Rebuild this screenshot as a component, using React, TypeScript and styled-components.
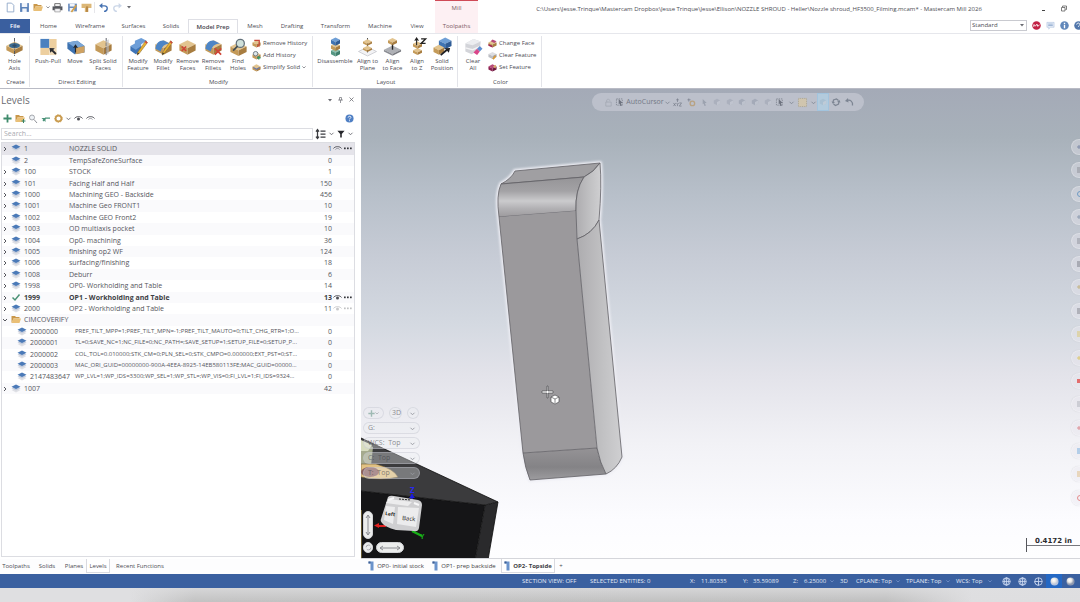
import React from "react";
import styled, { createGlobalStyle, css } from "styled-components";

const Global = createGlobalStyle`
  *, *::before, *::after { box-sizing: border-box; }
  body { margin: 0; background: #dedee0; }
  button, input, select { font: inherit; color: inherit; }
  button { border: 0; background: none; padding: 0; cursor: default; }
  svg { display: block; flex: none; overflow: visible; }
`;

const App = styled.div`
  display: flex;
  flex-direction: column;
  min-height: 100vh;
  overflow: hidden;
  background: #fff;
  color: #4b4c53;
  font-family: "Open Sans", "Liberation Sans", sans-serif;
  font-size: 6px;
  line-height: 8px;
`;

/* ---------- title bar and ribbon tabs ---------- */

const TopBar = styled.header`
  display: flex;
  height: 33px;
`;

const TopLeft = styled.div`
  width: 435px;
  display: flex;
  flex-direction: column;
  justify-content: space-between;
`;

const QuickAccess = styled.div`
  display: flex;
  align-items: center;
  height: 14px;
  padding-left: 3px;
`;

const QuickButton = styled.button<{ $w?: number }>`
  display: flex;
  justify-content: center;
  width: ${(p) => p.$w ?? 14}px;
`;

const QuickDivider = styled.span`
  width: 1px;
  height: 11px;
  margin: 0 1px;
  background: #e6e6ea;
`;

const TabRow = styled.nav`
  display: flex;
  height: 14px;
`;

const Tab = styled.button<{ $w: number; $kind?: "file" | "active" }>`
  width: ${(p) => p.$w}px;
  white-space: nowrap;
  ${(p) => p.$kind === "file" && css`background: #3a5f9f; color: #fff; font-weight: 600;`}
  ${(p) =>
    p.$kind === "active" &&
    css`
      border: 1px solid #dedfe5;
      border-bottom: 0;
      font-weight: 600;
      color: #44454c;
    `}
`;

const ContextTabs = styled.div`
  display: flex;
  flex-direction: column;
  width: 43px;
  margin-right: 49px;
  border-top: 1px solid #cf4a57;
  background: #fdf0f3;
  text-align: center;
  color: #7b5a63;
  button { height: 14px; }
`;

const ContextTitle = styled.span`
  flex: 1;
  padding-top: 3px;
`;

const TopRight = styled.div`
  flex: 1;
  display: flex;
  flex-direction: column;
  justify-content: space-between;
`;

const WindowRow = styled.div`
  display: flex;
  align-items: center;
  justify-content: space-between;
  height: 17px;
  padding-right: 13px;
  white-space: nowrap;
`;

const WindowTitle = styled.span`
  flex: 1;
  padding-right: 50px;
  text-align: center;
`;

const WindowButtons = styled.div`
  display: flex;
  gap: 15px;
`;

const HelpRow = styled.div`
  display: flex;
  align-items: center;
  justify-content: flex-end;
  gap: 5px;
  height: 16px;
  margin-right: -3px;
`;

const StyleSelect = styled.select`
  width: 57px;
  height: 11px;
  padding: 0 1px;
  border: 1px solid #c9cad0;
  border-radius: 0;
  background: #fff;
  appearance: none;
  font-size: 6px;
  line-height: 9px;
`;

const SelectWrap = styled.label`
  display: grid;
  align-items: center;
  justify-items: end;
  > * { grid-area: 1 / 1; }
  > svg { margin-right: 3px; }
`;

/* ---------- ribbon ---------- */

const Ribbon = styled.section`
  display: flex;
  height: 56px;
  padding-top: 2px;
  border-top: 1px solid #e6e7ec;
  border-bottom: 1px solid #b9bbc5;
`;

const Group = styled.div<{ $w: number }>`
  display: flex;
  flex-direction: column;
  justify-content: space-between;
  width: ${(p) => p.$w}px;
  height: 51px;
  padding: 1px 0 1px 2px;
  border-right: 1px solid #e3e4e9;
`;

const GroupBody = styled.div`
  display: flex;
  align-items: flex-start;
`;

const GroupLabel = styled.span`
  text-align: center;
  line-height: 8px;
`;

const BigButton = styled.button<{ $w: number }>`
  display: flex;
  flex-direction: column;
  align-items: center;
  gap: 2px;
  width: ${(p) => p.$w}px;
  padding-top: 1px;
  flex: none;
  white-space: nowrap;
  line-height: 7px;
`;

const SmallList = styled.div`
  display: flex;
  flex-direction: column;
  padding: 0 0 0 2px;
`;

const SmallButton = styled.button`
  display: flex;
  align-items: center;
  gap: 2px;
  height: 12px;
  white-space: nowrap;
`;

/* ---------- workspace ---------- */

const Workspace = styled.main`
  flex: 1;
  display: flex;
  min-height: 0;
`;

const Panel = styled.aside`
  display: flex;
  flex-direction: column;
  flex: none;
  width: 361px;
`;

const PanelHead = styled.div`
  display: flex;
  align-items: center;
  justify-content: space-between;
  height: 21px;
  padding: 0 7px 0 1px;
`;

const PanelTitle = styled.h1`
  margin: 0;
  font-size: 10px;
  font-weight: 400;
  line-height: 14px;
  color: #6a6b72;
`;

const IconRow = styled.div<{ $gap: number }>`
  display: flex;
  align-items: center;
  gap: ${(p) => p.$gap}px;
`;

const PanelTools = styled.div`
  display: flex;
  align-items: center;
  justify-content: space-between;
  height: 17px;
  padding: 0 7px 0 3px;
`;

const SearchRow = styled.div`
  display: flex;
  align-items: center;
  gap: 3px;
  height: 13px;
  padding: 0 8px 0 1px;
`;

const Search = styled.input`
  flex: 1;
  min-width: 0;
  height: 12px;
  padding: 0 2px;
  border: 1px solid #dcdde2;
  background: #fff;
  font-size: 7px;
  outline: 0;
  &::placeholder { color: #a9aab1; opacity: 1; }
`;

const TableWrap = styled.div`
  flex: 1;
  margin: 2px 6px 2px 1px;
  border: 1px solid #dcdde2;
`;

const LevelTable = styled.table`
  width: 100%;
  table-layout: fixed;
  border-collapse: collapse;
  font-size: 7px;
  line-height: 11px;
  color: #55565c;
  td { padding: 0; white-space: nowrap; vertical-align: top; }
`;

const Row = styled.tr<{ $mode?: string }>`
  height: 11px;
  &:nth-child(5n + 1), &:nth-child(5n + 3) { height: 12px; }
  &:nth-child(even) { background: #fafafc; }
  ${(p) => p.$mode === "selected" && css`background: #e5e4ea;`}
  ${(p) => p.$mode === "current" && css`font-weight: 700; color: #3e3f45;`}
`;

const ExpandCell = styled.div`
  display: flex;
  align-items: center;
  height: 11px;
`;

const LevelId = styled.div<{ $child?: boolean }>`
  display: flex;
  align-items: center;
  gap: 3px;
  height: 11px;
  padding-left: ${(p) => (p.$child ? 6 : 0)}px;
`;

const Name = styled.div<{ $child?: boolean }>`
  height: 11px;
  ${(p) => p.$child && css`padding-left: 6px; font-size: 6px;`}
`;

const Count = styled.div`
  display: flex;
  justify-content: flex-end;
  height: 11px;
`;

const RowMarks = styled.div<{ $dim?: boolean }>`
  display: flex;
  align-items: center;
  gap: 1px;
  height: 11px;
  padding-left: 1px;
  opacity: ${(p) => (p.$dim ? 0.3 : 1)};
`;

/* ---------- graphics view ---------- */

const View = styled.section`
  position: relative;
  flex: 1;
  min-width: 0;
  overflow: hidden;
  border-bottom: 1px solid #d5d6db;
  background: linear-gradient(
    #a4aab7 0%, #a8b1ba 10%, #b8c0ca 23%, #c7ccd6 36%,
    #d4d9e1 50%, #e3e3ea 61%, #f2f2f6 76%, #fcfcff 92%, #fefeff 100%
  );
`;

const Scene = styled.svg`
  position: absolute;
  left: 0;
  top: 0;
  width: 100%;
  height: 100%;
`;

const SelectionBar = styled.div`
  position: absolute;
  left: 231px;
  top: 4px;
  display: flex;
  align-items: center;
  width: 272px;
  height: 18px;
  padding-left: 10px;
  border-radius: 9px;
  background: #bcc0cb;
  color: #747986;
  font-size: 7px;
`;

const BarButton = styled.button<{ $w?: number; $on?: boolean }>`
  display: flex;
  align-items: center;
  justify-content: center;
  gap: 1px;
  flex: none;
  width: ${(p) => p.$w ?? 13}px;
  height: 18px;
  ${(p) => p.$on && css`background: #b3cbdd; box-shadow: inset 0 0 0 1px #a2c4de;`}
`;

const PlaneBox = styled.div`
  position: absolute;
  left: 2px;
  bottom: 79px;
  display: flex;
  flex-direction: column;
  gap: 3px;
  width: 57px;
  color: rgba(60, 62, 70, 0.6);
  font-size: 7px;
`;

const Pill = styled.button<{ $w?: number; $alpha?: number }>`
  display: flex;
  align-items: center;
  justify-content: space-between;
  width: ${(p) => (p.$w ? p.$w + "px" : "100%")};
  height: 12px;
  padding: 0 ${(p) => (p.$w && p.$w < 16 ? 2 : 4)}px;
  border: 1px solid rgba(190, 192, 202, 0.4);
  border-radius: 6px;
  background: rgba(236, 237, 242, ${(p) => p.$alpha ?? 0.35});
`;

const SideTools = styled.div`
  position: absolute;
  right: -7px;
  top: 50px;
  display: flex;
  flex-direction: column;
  justify-content: space-between;
  height: 367px;
`;

const SideTool = styled.button<{ $c: string }>`
  display: flex;
  align-items: center;
  width: 16px;
  height: 16px;
  padding-left: 5px;
  border: 1px solid rgba(255, 255, 255, 0.25);
  border-radius: 8px;
  background: rgba(232, 230, 238, 0.4);
  box-shadow: 0 0 1px rgba(140, 142, 155, 0.4);
  color: ${(p) => p.$c};
`;

const RotatePad = styled.div`
  position: absolute;
  left: 2px;
  bottom: 5px;
  display: grid;
  grid-template-columns: 10px 28px;
  grid-template-rows: 28px 11px;
  gap: 3px;
`;

const PadButton = styled.button<{ $col?: number }>`
  display: flex;
  align-items: center;
  justify-content: center;
  border: 1px solid #d2d3d6;
  border-radius: 6px;
  background: #eceded;
  grid-column: ${(p) => p.$col ?? 1};
`;

const Scale = styled.div`
  position: absolute;
  right: 0;
  bottom: 6px;
  width: 54px;
  height: 14px;
  border-left: 1px solid #55565c;
  background: linear-gradient(#77787e, #77787e) 0 7px / 100% 1px no-repeat;
  color: #2a2a2e;
  font: 700 7px/7px "DejaVu Sans", sans-serif;
  text-align: center;
  white-space: nowrap;
`;

/* ---------- bottom ---------- */

const BottomTabs = styled.div`
  display: flex;
  height: 15px;
  padding-bottom: 1px;
  background: #fdfdfe;
`;

const PanelTabs = styled.nav`
  display: flex;
  width: 365px;
`;

const BottomTab = styled.button<{ $w: number; $on?: boolean }>`
  display: flex;
  align-items: center;
  justify-content: center;
  gap: 3px;
  width: ${(p) => p.$w}px;
  white-space: nowrap;
  ${(p) =>
    p.$on &&
    css`
      border: 1px solid #d9dae0;
      border-top: 0;
      background: #fff;
    `}
`;

const SheetTab = styled(BottomTab)`
  color: #3d3e44;
  font-weight: ${(p) => (p.$on ? 700 : 400)};
`;

const Status = styled.footer`
  display: flex;
  align-items: center;
  justify-content: flex-end;
  height: 14px;
  padding-right: 2px;
  background: #3a60a0;
  color: #e3eaf6;
  white-space: nowrap;
`;

const StatusItem = styled.span<{ $w: number }>`
  width: ${(p) => p.$w}px;
  flex: none;
`;

const StatusDrop = styled.button<{ $w: number }>`
  display: flex;
  align-items: center;
  justify-content: space-between;
  width: ${(p) => p.$w}px;
  padding-right: 3px;
  margin-right: 3px;
`;

const ShadeButton = styled.button<{ $on?: boolean }>`
  display: flex;
  align-items: center;
  justify-content: center;
  width: 16px;
  height: 14px;
  ${(p) => p.$on && css`background: #2468c4;`}
`;

const Desk = styled.div`
  height: 14px;
  background:
    linear-gradient(rgba(223, 223, 225, 0.7), rgba(223, 223, 225, 0)),
    linear-gradient(90deg, #dfdfe1 12%, #c2c2c2 18%, #bfbfbf 82%, #dedee0 90%);
`;

/* ---------- icons ---------- */

type Tone = [string, string, string];
const TAN: Tone = ["#e2c48f", "#c49a58", "#a87d40"];
const BLUE: Tone = ["#6f9fd6", "#3f74b4", "#2f5c96"];
const TEAL: Tone = ["#8cc0ae", "#559783", "#3f7f6c"];
const GREY: Tone = ["#dddee2", "#bcbec4", "#a2a4ab"];
const WINE: Tone = ["#b74a78", "#8c1f50", "#6d163d"];

const Iso = ({ x = 10, y = 10, w = 9, h = 6, t = TAN }: { x?: number; y?: number; w?: number; h?: number; t?: Tone }) => {
  const d = w / 2;
  return (
    <g>
      <polygon points={`${x - w},${y - h / 2} ${x},${y - h / 2 - d} ${x + w},${y - h / 2} ${x},${y - h / 2 + d}`} fill={t[0]} />
      <polygon points={`${x - w},${y - h / 2} ${x},${y - h / 2 + d} ${x},${y + h / 2 + d} ${x - w},${y + h / 2}`} fill={t[1]} />
      <polygon points={`${x + w},${y - h / 2} ${x},${y - h / 2 + d} ${x},${y + h / 2 + d} ${x + w},${y + h / 2}`} fill={t[2]} />
    </g>
  );
};

const Pencil = () => (
  <g>
    <path d="M18 3 L20 5 L11 17 L8.500 19 L9 16 Z" fill="#e8b130" stroke="#8a6a2a" strokeWidth=".6" />
    <path d="M9 16 L11 17 L8.500 19Z" fill="#333" />
    <path d="M18 3 L20 5 L19 6.500 L17 4.500Z" fill="#c44" />
  </g>
);

const Cross = ({ x, y, s }: { x: number; y: number; s: number }) => (
  <path d={`M${x - s} ${y - s} L${x + s} ${y + s} M${x + s} ${y - s} L${x - s} ${y + s}`} stroke="#cf4437" strokeWidth="1.800" fill="none" />
);

const bigArt: Record<string, React.ReactNode> = {
  hole: (
    <>
      <Iso y={11} h={5} />
      <ellipse cx="10" cy="8.500" rx="6" ry="3" fill="#3b6b91" />
      <path d="M10 0V20" stroke="#4a4f58" strokeWidth="1" strokeDasharray="4 1 1 1" />
      <ellipse cx="10" cy="8.500" rx="2.500" ry="1.200" fill="#2f4d68" />
    </>
  ),
  push: (
    <>
      <path d="M1 1H11V11H1Z" fill="#4a80bf" />
      <path d="M11 1H19V11H11ZM1 11H11V19H1Z" fill="#edcf9f" />
      <path d="M11 11H19V19H11Z" fill="#f0dcb9" />
      <path d="M11 11L17 11.500L15.200 13.200L19 17L17.500 18.500L13.600 14.700L12 16.500Z" fill="#2c2c30" />
    </>
  ),
  move: (
    <>
      <path d="M1 5L12 3L20 9V16L9 18L1 12Z" fill="#3d72b0" />
      <path d="M1 5L12 3L20 9L10 11Z" fill="#79a5d6" />
      <path d="M10 11L20 9V16L10 18Z" fill="#cfa262" />
      <path d="M10 9V16M8 11L10 8L12 11" stroke="#24272c" strokeWidth="1.300" fill="none" />
    </>
  ),
  split: (
    <>
      <Iso y={10.500} h={7} />
      <path d="M13 0V20" stroke="#51555d" strokeWidth="1" strokeDasharray="4 1" />
      <path d="M13 3L16 1.500V17L13 19Z" fill="#b9bdc4" opacity=".6" />
    </>
  ),
  modFeature: (
    <>
      <path d="M1 9L6 6V3L13 0L19 3L13 7V10L7 14Z" fill="#6d9ed8" />
      <path d="M1 9L7 13V18L1 14ZM7 13L13 9V14L7 18Z" fill="#3f74b6" />
      <Pencil />
    </>
  ),
  modFillet: (
    <>
      <Iso y={10.500} h={7} />
      <path d="M1 12C2 5 6 2 11 3L17 6C11 6 8 10 7 15Z" fill="#4d85c6" />
      <Pencil />
    </>
  ),
  remFaces: (
    <>
      <Iso y={10.500} h={7} />
      <Cross x={6} y={12} s={2.500} />
    </>
  ),
  remFillets: (
    <>
      <Iso y={10.500} h={7} />
      <path d="M1 12C2 5 6 2 11 3L17 6C11 6 8 10 7 15Z" fill="#4d85c6" />
      <Cross x={15} y={15} s={3.500} />
    </>
  ),
  find: (
    <>
      <Iso y={12.500} h={6} />
      <circle cx="12" cy="6" r="4.500" fill="#cfe0da" stroke="#63707a" strokeWidth="1.400" />
      <path d="M9 9L4 14" stroke="#3f4b52" strokeWidth="1.800" />
    </>
  ),
  disassemble: (
    <>
      <Iso y={16} w={5} h={4} t={TEAL} />
      <Iso y={10} w={5} h={4} />
      <Iso y={4} w={5} h={4} t={BLUE} />
    </>
  ),
  plane: (
    <>
      <path d="M0 15L10 10L20 15L10 20Z" fill="#f3f3f5" stroke="#b9bbc2" strokeWidth=".7" />
      <path d="M10 0V16" stroke="#3d3f45" />
      <Iso y={12} w={5} h={2} />
      <Iso y={5} w={5} h={2} />
    </>
  ),
  face: (
    <>
      <Iso y={14} w={9.500} h={2} t={["#aeb0b5", "#8a8c92", "#77797f"]} />
      <path d="M10 6V13" stroke="#222" strokeWidth="1.500" />
      <Iso y={4} w={5} h={3} />
    </>
  ),
  z: (
    <>
      <Iso y={15} w={5} h={3} />
      <Iso y={8} w={5} h={3} />
      <path d="M9 8V1M7 3L9 0L11 3" stroke="#222" strokeWidth="1.200" fill="none" />
      <path d="M14 1H19L14 6H19" stroke="#222" strokeWidth="1.500" fill="none" />
    </>
  ),
  position: (
    <>
      <Iso x={13} y={6} w={7} h={6} t={BLUE} />
      <Iso x={6} y={13} w={6} h={5} />
      <path d="M8 19L15 13" stroke="#1e1f23" strokeWidth="2" />
      <path d="M12.500 11.500L18.500 11L17 16.500Z" fill="#1e1f23" />
    </>
  ),
  clear: (
    <>
      <path d="M1 6L10 1L18 4L17 13L8 18L1 15Z" fill="#d3d4d9" />
      <path d="M1 6L10 1L18 4L9 8Z" fill="#ecedf0" />
      <path d="M1 11L9 13L18 9" stroke="#f3f3f5" strokeWidth="1.500" fill="none" />
      <path d="M10 16L14 12L17 15L14 19Z" fill="#d9468a" />
      <path d="M14 12L17 9L20 12L17 15Z" fill="#5f8fd0" />
    </>
  ),
};

const Big = ({ art }: { art: string }) => (
  <svg width="19" height="18" viewBox="0 0 20 20">{bigArt[art]}</svg>
);

const Mini = ({ kind }: { kind: string }) => (
  <svg width="9" height="9" viewBox="0 0 20 20">
    {kind === "set" ? <Iso y={11} h={7} t={WINE} /> : kind === "clearF" ? <Iso y={10} h={7} t={GREY} /> : <Iso y={11} h={7} />}
    {kind === "removeH" && <><path d="M5 3H16V13" stroke="#c94a3c" strokeWidth="3" fill="none" /><Cross x={14} y={15} s={3} /></>}
    {kind === "addH" && <><circle cx="8" cy="6" r="5" fill="#dfe6ea" stroke="#68757d" strokeWidth="2" /><path d="M15 11V19M11 15H19" stroke="#3b9468" strokeWidth="3" /></>}
    {kind === "simplify" && <path d="M3 10L10 14L17 10" stroke="#6c7aa8" strokeWidth="2.500" fill="none" />}
    {kind === "change" && <><path d="M1 11L10 15V19L1 15Z" fill="#a02558" /><path d="M10 1L19 5L14 9L6 5Z" fill="#b74a78" /></>}
    {kind === "clearF" && <path d="M11 18L17 11" stroke="#d79a3c" strokeWidth="4" />}
    {kind === "set" && <path d="M11 8L18 4L17 12Z" fill="#d9b06a" />}
  </svg>
);

const Caret = ({ c = "#6a6b72", s = 5 }: { c?: string; s?: number }) => (
  <svg width={s} height={s} viewBox="0 0 10 10"><path d="M1 3.500L5 7.500L9 3.500" fill="none" stroke={c} strokeWidth="1.800" /></svg>
);

const Triangle = ({ c = "#6a6b72" }: { c?: string }) => (
  <svg width="4" height="4" viewBox="0 0 8 8"><path d="M0 2H8L4 7Z" fill={c} /></svg>
);

const Expander = ({ open }: { open?: boolean }) => (
  <svg width="6" height="6" viewBox="0 0 12 12">
    <path d={open ? "M2 4L6 8L10 4" : "M4 2L8 6L4 10"} fill="none" stroke="#4c4d54" strokeWidth="1.900" />
  </svg>
);

const LayerIcon = () => (
  <svg width="10" height="9" viewBox="0 0 20 18">
    <path d="M1 12L10 8L19 12L10 17Z" fill="#dfe0e5" />
    <path d="M1 8.500L10 4L19 8.500L10 13Z" fill="#c3cbdb" />
    <path d="M1 5.500L10 1L19 5.500L10 10Z" fill="#4b7ab8" />
  </svg>
);

const CheckIcon = () => (
  <svg width="10" height="9" viewBox="0 0 20 18"><path d="M3 9L8 14L17 3" fill="none" stroke="#4a9275" strokeWidth="3" /></svg>
);

const FolderIcon = ({ plus }: { plus?: boolean }) => (
  <svg width="10" height="9" viewBox="0 0 20 18">
    <path d="M1 2H8L10 4H17V7H5L2 15H1Z" fill="#c9974a" />
    <path d="M5 7H20L17 16H1Z" fill="#e9bf76" />
    {plus && <path d="M17 10V18M13 14H21" stroke="#3b8467" strokeWidth="2" />}
  </svg>
);

const EyeIcon = ({ dot = true }: { dot?: boolean }) => (
  <svg width="9" height="7" viewBox="0 0 18 14">
    <path d="M1 7C4 2 14 2 17 7" fill="none" stroke="#4c4d53" strokeWidth="1.900" />
    {dot ? <circle cx="9" cy="8" r="3" fill="#4c4d53" /> : <path d="M5 9C7 6 11 6 13 9" fill="none" stroke="#777880" strokeWidth="1.500" />}
  </svg>
);

const DotsIcon = () => (
  <svg width="9" height="3" viewBox="0 0 9 3">
    {[1, 4, 7].map((x) => <rect key={x} x={x} y="0.500" width="1.700" height="1.700" fill="#333439" />)}
  </svg>
);

const GlobeIcon = ({ half }: { half?: boolean }) => (
  <svg width="9" height="9" viewBox="0 0 18 18" fill="none" stroke="#cfdcf2" strokeWidth="1.600">
    <circle cx="9" cy="9" r="7.500" />
    <path d="M1.500 9H16.500M9 1.500V16.500" />
    {half ? <path d="M9 9V16.500C4 16 2 13 1.500 9Z" fill="#3a60a0" /> : <ellipse cx="9" cy="9" rx="4" ry="7.500" />}
  </svg>
);

const BallIcon = ({ id, c }: { id: string; c: string }) => (
  <svg width="9" height="9" viewBox="0 0 18 18">
    <defs><radialGradient id={id} cx=".4" cy=".35"><stop offset="0" stopColor="#fff" /><stop offset=".5" stopColor="#eceae6" /><stop offset="1" stopColor={c} /></radialGradient></defs>
    <circle cx="9" cy="9" r="8" fill={`url(#${id})`} />
  </svg>
);

const SheetIcon = () => (
  <svg width="6" height="10" viewBox="0 0 12 20"><path d="M1 1H11V19H5V5H1Z" fill="#6b93cb" /><path d="M1 1H5V5H1Z" fill="#3f5f92" /></svg>
);

const Q = ({ children, w = 11 }: { children: React.ReactNode; w?: number }) => (
  <svg width={w} height={w} viewBox="0 0 20 20">{children}</svg>
);

const BlobIcon = ({ c = "#a5abb8" }: { c?: string }) => (
  <Q w={8}><path d="M2 6L10 2L18 6V14L10 18L2 14Z" fill={c} opacity=".75" /><path d="M10 10L18 6V14L10 18Z" fill="#ced2da" opacity=".6" /></Q>
);

const CursorIcon = ({ c = "#858b97", box }: { c?: string; box?: boolean }) => (
  <Q w={9}>
    {box && <path d="M1 2H14V16H1Z" fill="none" stroke={c} strokeWidth="1.500" strokeDasharray="3 2" />}
    <path d="M6 2L15 11H11L13 17L10 18L8 12L6 14Z" fill={c} />
  </Q>
);

const InvertIcon = () => (
  <Q w={10}>
    <path d="M4 11L5 6L11 4L15 7M16 9L15 14L9 17L5 14" fill="none" stroke="#7d8593" strokeWidth="2.500" />
    <path d="M1 9L4 14L8 10ZM12 10L19 11L17 6Z" fill="#7d8593" />
  </Q>
);

const LastIcon = () => (
  <Q w={10}>
    <path d="M17 17C18 9 13 5 6 7" fill="none" stroke="#7d8593" strokeWidth="2.500" />
    <path d="M8 2L2 8L9 11Z" fill="#7d8593" />
  </Q>
);

/* ---------- data ---------- */

const tabs: [string, number, ("file" | "active")?][] = [
  ["File", 30, "file"], ["Home", 37], ["Wireframe", 46], ["Surfaces", 41], ["Solids", 34],
  ["Model Prep", 50, "active"], ["Mesh", 34], ["Drafting", 40], ["Transform", 47], ["Machine", 42], ["View", 32],
];

type BigSpec = [string, string, string, number];
const groups: { label: string; w: number; big: BigSpec[]; small?: [string, string, boolean?][] }[] = [
  { label: "Create", w: 30, big: [["hole", "Hole", "Axis", 25]] },
  { label: "Direct Editing", w: 93, big: [["push", "Push-Pull", "", 32], ["move", "Move", "", 22], ["split", "Split Solid", "Faces", 34]] },
  {
    label: "Modify", w: 190,
    big: [["modFeature", "Modify", "Feature", 26], ["modFillet", "Modify", "Fillet", 24], ["remFaces", "Remove", "Faces", 25], ["remFillets", "Remove", "Fillets", 26], ["find", "Find", "Holes", 24]],
    small: [["removeH", "Remove History"], ["addH", "Add History"], ["simplify", "Simplify Solid", true]],
  },
  {
    label: "Layout", w: 145,
    big: [["disassemble", "Disassemble", "", 40], ["plane", "Align to", "Plane", 25], ["face", "Align", "to Face", 25], ["z", "Align", "to Z", 24], ["position", "Solid", "Position", 26]],
  },
  { label: "Color", w: 84, big: [["clear", "Clear", "All", 26]], small: [["change", "Change Face"], ["clearF", "Clear Feature"], ["set", "Set Feature"]] },
];

type Level = { id: string; name?: string; n?: string; mode?: "selected" | "current" | "dim"; kind?: "folder" | "child" | "leaf" };
const levels: Level[] = [
  { id: "1", name: "NOZZLE SOLID", n: "1", mode: "selected" },
  { id: "2", name: "TempSafeZoneSurface", n: "0", kind: "leaf" },
  { id: "100", name: "STOCK", n: "1" },
  { id: "101", name: "Facing Half and Half", n: "150" },
  { id: "1000", name: "Machining GEO - Backside", n: "456" },
  { id: "1001", name: "Machine Geo FRONT1", n: "10" },
  { id: "1002", name: "Machine GEO Front2", n: "19" },
  { id: "1003", name: "OD multiaxis pocket", n: "10" },
  { id: "1004", name: "Op0- machining", n: "36" },
  { id: "1005", name: "finishing op2 WF", n: "124" },
  { id: "1006", name: "surfacing/finishing", n: "18" },
  { id: "1008", name: "Deburr", n: "6" },
  { id: "1998", name: "OP0- Workholding and Table", n: "14" },
  { id: "1999", name: "OP1 - Workholding and Table", n: "13", mode: "current" },
  { id: "2000", name: "OP2 - Workholding and Table", n: "11", mode: "dim" },
  { id: "CIMCOVERIFY", kind: "folder" },
  { id: "2000000", name: "PREF_TILT_MPP=1;PREF_TILT_MPN=-1;PREF_TILT_MAUTO=0;TILT_CHG_RTR=1;O...", n: "0", kind: "child" },
  { id: "2000001", name: "TL=0;SAVE_NC=1;NC_FILE=0;NC_PATH=;SAVE_SETUP=1;SETUP_FILE=0;SETUP_P...", n: "0", kind: "child" },
  { id: "2000002", name: "COL_TOL=0.010000;STK_CM=0;PLN_SEL=0;STK_CMPO=0.000000;EXT_PST=0;ST...", n: "0", kind: "child" },
  { id: "2000003", name: "MAC_ORI_GUID=00000000-900A-4EEA-8925-14EB580113FE;MAC_GUID=00000...", n: "0", kind: "child" },
  { id: "2147483647", name: "WP_LVL=1;WP_IDS=3300;WP_SEL=1;WP_STL=;WP_VIS=0;FI_LVL=1;FI_IDS=9324...", n: "0", kind: "child" },
  { id: "1007", n: "42" },
];

const sideColors = ["#7f8aa8", "#8d8f97", "#6f9bc4", "#8d9bb0", "#8f929c", "#7c7e88", "#c4b384", "#85868e", "#dcc873", "#dcc873", "#e36d6d", "#b0b2bb", "#dd8f95", "#79aede", "#e0bd85", "#e58d8d"];

/* ---------- graphics scene ---------- */

const Part = () => (
  <g strokeLinejoin="round">
    <defs>
      <linearGradient id="band" x1="0" y1="0" x2="0" y2="1">
        <stop offset="0" stopColor="#959497" /><stop offset=".35" stopColor="#a3a2a5" />
        <stop offset=".6" stopColor="#cbcbcd" /><stop offset=".8" stopColor="#b0afb2" /><stop offset="1" stopColor="#9c9a9d" />
      </linearGradient>
      <linearGradient id="side" x1="0" y1="0" x2="1" y2="0">
        <stop offset="0" stopColor="#adacaf" /><stop offset=".6" stopColor="#c2c2c4" /><stop offset="1" stopColor="#cfcfd1" />
      </linearGradient>
      <linearGradient id="foot" x1="0" y1="0" x2="0" y2="1">
        <stop offset="0" stopColor="#959396" /><stop offset=".6" stopColor="#848386" /><stop offset="1" stopColor="#9d9c9f" />
      </linearGradient>
      <filter id="halo" x="-20%" y="-10%" width="140%" height="120%"><feGaussianBlur stdDeviation="1.200" /></filter>
    </defs>
    <path
      d="M515 171L600 163Q602 185 599 220L622 457Q617 469 606 474L530 480L523 453L499 217Q496 195 501 184Q511 179 515 171Z"
      fill="none" stroke="#eeeef4" strokeWidth="4" filter="url(#halo)"
    />
    <g stroke="#626166" strokeWidth=".8">
      <path d="M515 171L600 163Q594 172 584 177L501 184Q511 179 515 171Z" fill="#a09fa2" />
      <path d="M501 184L584 177Q575 190 576 211L499 217Q496 195 501 184Z" fill="url(#band)" />
      <path d="M499 217L576 211L577 239L597 448L523 453Z" fill="#9b999c" stroke="none" />
      <path d="M523 453L597 448Q600 463 606 474L530 480Q525 468 523 453Z" fill="url(#foot)" />
      <path d="M584 177Q594 172 600 163Q602 185 599 220Q592 234 577 239L576 211Q575 190 584 177Z" fill="url(#side)" />
      <path d="M577 239Q592 234 599 220L622 457Q617 469 606 474Q600 463 597 448Z" fill="url(#side)" />
      <path d="M499 217L523 453" fill="none" />
    </g>
    <g fill="#fff" stroke="#3c3c40" strokeWidth=".6">
      <path d="M547 386V391H542V393H547V398H548V393H553V391H548V386Z" />
      <path d="M551 397L555 395L559 397V402L555 404L551 402Z" />
      <path d="M551 397L555 399L559 397M555 399V403" fill="none" />
    </g>
  </g>
);

const Table3D = () => (
  <g>
    <path d="M361 438L498 502L485 505L361 491Z" fill="#3b3b3d" />
    <path d="M361 491L485 505L475 560H361Z" fill="#151517" />
    <path d="M485 505L498 502L488 560H475Z" fill="#2a2a2c" />
    <path d="M361 438L498 502L488 560M361 491L485 505L475 560M485 505L498 502" fill="none" stroke="#0c0c0d" strokeWidth=".8" />
    <path d="M361 441L373 447L371 466H361Z" fill="#a5aa8d" />
    <path d="M361 440L372 445L368 451L361 451Z" fill="#d7dcbf" />
    <path d="M361 464L376 464Q394 469 398 477Q382 481 361 477Z" fill="#e2c283" stroke="#6d5a38" strokeWidth=".6" />
    <ellipse cx="370" cy="472" rx="9" ry="5" fill="#8a5f5f" />
    <path d="M361 510V560" stroke="#b69b4e" strokeWidth="1" />
  </g>
);

const ViewCube = () => (
  <g>
    <path d="M412 501V494" stroke="#1c1ce0" strokeWidth="1.500" fill="none" />
    <path d="M409 498L412 494L415 498Z" fill="#1c1ce0" />
    <text x="410" y="493" fill="#2a2af0" fontSize="8" fontWeight="700">Z</text>
    <path d="M386 526H377" stroke="#e02020" strokeWidth="2" />
    <path d="M379 523L374 525.500L379 528Z" fill="#e02020" />
    <path d="M412 531L422 536" stroke="#18b018" strokeWidth="2.500" />
    <text x="420" y="539" fill="#18b018" fontSize="7" fontWeight="700">Y</text>
    <path d="M388 497Q390 495 394 496L418 500Q422 501 422 505L419 528Q418 532 414 531L396 530Q385 527 382 523Q380 521 381 519Z" fill="#cfcfd1" />
    <path d="M389 499L412 502L408 506L386 503ZM398 507L419 508L416 527L397 524ZM386 506L395 507L393 524L384 520Z" fill="#ececed" />
    <path d="M388 500L394 498M414 503L419 505" stroke="#f7f7f8" strokeWidth="2" />
    <text x="402" y="520" fill="#1e1e20" fontSize="6" transform="rotate(5 402 520)">Back</text>
    <text x="385" y="515" fill="#1e1e20" fontSize="5" fontWeight="700" transform="rotate(8 385 515)">Left</text>
    <path d="M399 499L411 500" stroke="#333" strokeWidth="1" strokeDasharray="2 1" />
  </g>
);

export default function MastercamWindow() {
  return (
    <App>
      <Global />
      <TopBar>
        <TopLeft>
          <QuickAccess>
            <QuickButton aria-label="New"><Q><path d="M4 2H12L16 6V18H4Z" fill="#fff" stroke="#86a0c4" strokeWidth="1.500" /></Q></QuickButton>
            <QuickButton aria-label="Save"><Q><path d="M2 2H18V18H2Z" fill="#5b82b9" /><path d="M5 2H15V9H5ZM6 12H14V18H6Z" fill="#f2f5fa" /></Q></QuickButton>
            <QuickButton aria-label="Open"><FolderIcon /></QuickButton>
            <QuickButton $w={5} aria-label="Recent files"><Caret s={4} /></QuickButton>
            <QuickButton $w={15} aria-label="Print"><Q><path d="M5 3H15V8H5Z" fill="#fff" stroke="#555" strokeWidth="1.500" /><path d="M1 8H19V15H1Z" fill="#55575e" /><path d="M5 12H15V18H5Z" fill="#f3f3f5" stroke="#777" /></Q></QuickButton>
            <QuickButton aria-label="Save as"><Q><path d="M2 3H18V17H2Z" fill="#6b8dbe" /><path d="M5 3H14V8H5ZM5 11H13V17H5Z" fill="#f2f5fa" /><path d="M17 6L8 18" stroke="#d5a045" strokeWidth="3" /></Q></QuickButton>
            <QuickButton aria-label="Zip to go"><Q><path d="M1 3H19V11H13V18H7V11H1Z" fill="#dcb777" /><path d="M9 8H13V18H9Z" fill="#b98a48" /></Q></QuickButton>
            <QuickDivider />
            <QuickButton aria-label="Undo"><Q><path d="M6 7H12C19 7 18 17 11 17" fill="none" stroke="#4672b2" strokeWidth="2.500" /><path d="M2 7L8 2V12Z" fill="#4672b2" /></Q></QuickButton>
            <QuickButton aria-label="Redo"><Q><path d="M14 7H8C1 7 2 17 9 17" fill="none" stroke="#ccd7e8" strokeWidth="2.500" /><path d="M18 7L12 2V12Z" fill="#ccd7e8" /></Q></QuickButton>
            <QuickButton $w={9} aria-label="Customize"><Triangle /></QuickButton>
          </QuickAccess>
          <TabRow>
            {tabs.map(([t, w, k]) => <Tab key={t} $w={w} $kind={k}>{t}</Tab>)}
          </TabRow>
        </TopLeft>
        <ContextTabs>
          <ContextTitle>Mill</ContextTitle>
          <Tab $w={43}>Toolpaths</Tab>
        </ContextTabs>
        <TopRight>
          <WindowRow>
            <WindowTitle>C:\Users\Jesse.Trinque\Mastercam Dropbox\Jesse Trinque\Jesse\Ellison\NOZZLE SHROUD - Heller\Nozzle shroud_HF3500_Filming.mcam* - Mastercam Mill 2026</WindowTitle>
            <WindowButtons>
              <button aria-label="Minimize"><svg width="5" height="7" viewBox="0 0 5 7"><path d="M1 5.500H4" stroke="#444" /></svg></button>
              <button aria-label="Restore"><svg width="6" height="7" viewBox="0 0 12 14"><path d="M3 4V2H11V9H9M1 5H8V12H1Z" fill="none" stroke="#555" strokeWidth="1.500" /></svg></button>
            </WindowButtons>
          </WindowRow>
          <HelpRow>
            <SelectWrap>
              <StyleSelect aria-label="Attribute style"><option>Standard</option></StyleSelect>
              <Triangle />
            </SelectWrap>
            <Q w={9}><circle cx="10" cy="10" r="9.500" fill="#c22245" /><path d="M4 13V8L8 11L11 7L13 12L17 8" stroke="#fff" strokeWidth="2" fill="none" /></Q>
            <Q w={9}><path d="M2 3H18V14H10L6 18V14H2Z" fill="#e3ebf6" stroke="#9fb6d6" /><path d="M5 7H15M5 10H15" stroke="#7f9cc6" strokeWidth="1.500" /></Q>
            <Q w={9}><circle cx="10" cy="10" r="9.500" fill="#6288ba" /><path d="M10 4V7M10 9V16" stroke="#fff" strokeWidth="3" /></Q>
            <Q w={9}><circle cx="10" cy="10" r="9.500" fill="#5277ac" /><path d="M6 8C6 3 14 4 13 8C12 10 10 10 10 13" stroke="#fff" strokeWidth="2" fill="none" /></Q>
          </HelpRow>
        </TopRight>
      </TopBar>

      <Ribbon>
        {groups.map((g) => (
          <Group key={g.label} $w={g.w}>
            <GroupBody>
              {g.big.map(([art, a, b, w]) => (
                <BigButton key={a + b} $w={w}>
                  <Big art={art} />
                  <span>{a}{b && <><br />{b}</>}</span>
                </BigButton>
              ))}
              {g.small && (
                <SmallList>
                  {g.small.map(([k, t, drop]) => (
                    <SmallButton key={t}><Mini kind={k} />{t}{drop && <Caret s={4} />}</SmallButton>
                  ))}
                </SmallList>
              )}
            </GroupBody>
            <GroupLabel>{g.label}</GroupLabel>
          </Group>
        ))}
      </Ribbon>

      <Workspace>
        <Panel>
          <PanelHead>
            <PanelTitle>Levels</PanelTitle>
            <IconRow $gap={6}>
              <Triangle />
              <svg width="5" height="6" viewBox="0 0 10 12"><path d="M3 1H7V6H9H1H3ZM5 6V12" fill="none" stroke="#77787f" strokeWidth="1.500" /></svg>
              <svg width="5" height="5" viewBox="0 0 10 10"><path d="M1 1L9 9M9 1L1 9" stroke="#66676e" strokeWidth="1.500" /></svg>
            </IconRow>
          </PanelHead>
          <PanelTools>
            <IconRow $gap={3}>
              <Q w={9}><path d="M10 1V19M1 10H19" stroke="#3f8b6c" strokeWidth="4" /></Q>
              <FolderIcon plus />
              <Q w={10}><circle cx="8" cy="7" r="5" fill="#eef2f6" stroke="#8e9097" strokeWidth="1.500" /><path d="M12 11L18 18" stroke="#8e9097" strokeWidth="2" /></Q>
              <Q w={10}><path d="M1 8H9V16Z" fill="#4b9379" /><path d="M4 14L9 8H18" stroke="#4b9379" strokeWidth="2.500" fill="none" /></Q>
              <Q w={9}><circle cx="10" cy="10" r="6.500" fill="none" stroke="#c99b4e" strokeWidth="4" /><circle cx="10" cy="10" r="8.500" fill="none" stroke="#c99b4e" strokeWidth="2" strokeDasharray="3 3" /></Q>
              <Caret />
              <EyeIcon />
              <EyeIcon dot={false} />
            </IconRow>
            <Q w={9}><circle cx="10" cy="10" r="9" fill="#4f7fc4" /><path d="M7 8C7 4 14 4 13 8C12 10 10 10 10 12M10 14V16" stroke="#fff" strokeWidth="2" fill="none" /></Q>
          </PanelTools>
          <SearchRow>
            <Search placeholder="Search..." aria-label="Search levels" />
            <Q w={10}><path d="M3 2V18M0 5L3 1L6 5M0 15L3 19L6 15M9 4H19M9 10H19M9 16H19" stroke="#3a3b40" strokeWidth="2.500" fill="none" /></Q>
            <Caret />
            <Q w={8}><path d="M1 2H19L12 10V19H8V10Z" fill="#26272b" /></Q>
            <Caret />
          </SearchRow>
          <TableWrap>
            <LevelTable>
              <colgroup>
                <col style={{ width: 9 }} /><col style={{ width: 58 }} /><col /><col style={{ width: 9 }} /><col style={{ width: 22 }} />
              </colgroup>
              <tbody>
                {levels.map((l) => {
                  const child = l.kind === "child";
                  return (
                    <Row key={l.id} $mode={l.mode}>
                      <td><ExpandCell>{!child && l.kind !== "leaf" && <Expander open={l.kind === "folder"} />}</ExpandCell></td>
                      <td>
                        <LevelId $child={child}>
                          {l.kind === "folder" ? <FolderIcon /> : l.mode === "current" ? <CheckIcon /> : <LayerIcon />}
                          {l.id}
                        </LevelId>
                      </td>
                      <td><Name $child={child}>{l.name}</Name></td>
                      <td><Count>{l.n}</Count></td>
                      <td>{l.mode && <RowMarks $dim={l.mode === "dim"}><EyeIcon dot={l.mode !== "selected"} /><DotsIcon /></RowMarks>}</td>
                    </Row>
                  );
                })}
              </tbody>
            </LevelTable>
          </TableWrap>
        </Panel>

        <View>
          <Scene>
            <g transform="translate(-361 -89)">
              <Table3D />
              <Part />
              <ViewCube />
            </g>
          </Scene>
          <SelectionBar>
            <BarButton aria-label="Lock"><Q w={9}><path d="M4 9H16V18H4ZM6 9V5C6 2 13 2 13 6" fill="none" stroke="#a3a8b4" strokeWidth="1.800" /></Q></BarButton>
            <BarButton $w={56}><CursorIcon box c="#6f7480" />AutoCursor<Caret c="#858a96" /></BarButton>
            <BarButton aria-label="Enter position"><Q w={9}><path d="M10 1V9M7 4H13M1 11L6 18M6 11L1 18M8 11L10 14L13 11M10 14V18M14 11H19L14 18H19" stroke="#737986" strokeWidth="1.500" fill="none" /></Q></BarButton>
            <BarButton $w={14} aria-label="Snap settings"><Q w={9}><circle cx="12" cy="12" r="5" fill="none" stroke="#b8a283" strokeWidth="3" /><path d="M4 1V8M1 4H8" stroke="#737986" strokeWidth="1.500" /></Q></BarButton>
            <BarButton $w={12} aria-label="Select"><CursorIcon c="#9ca2af" /></BarButton>
            <BarButton aria-label="Edges"><BlobIcon /></BarButton>
            <BarButton aria-label="Faces"><BlobIcon /></BarButton>
            <BarButton $w={12} aria-label="Body"><BlobIcon c="#9ca3b1" /></BarButton>
            <BarButton aria-label="Features"><BlobIcon c="#9ca3b1" /></BarButton>
            <BarButton aria-label="Last"><BlobIcon /></BarButton>
            <BarButton aria-label="Selection method"><CursorIcon box c="#6f7480" /></BarButton>
            <BarButton $w={8} aria-label="Method menu"><Caret c="#858a96" /></BarButton>
            <BarButton $w={14} aria-label="Window select"><Q w={9}><path d="M1 1H19V19H1Z" fill="#d0c5ae" stroke="#a0977f" strokeWidth="1.500" strokeDasharray="2 2" /></Q></BarButton>
            <BarButton $w={8} aria-label="Window menu"><Caret c="#858a96" /></BarButton>
            <BarButton $w={12} $on aria-label="Verify selection"><BlobIcon c="#a6bccd" /></BarButton>
            <BarButton aria-label="Invert"><InvertIcon /></BarButton>
            <BarButton aria-label="Select last"><LastIcon /></BarButton>
          </SelectionBar>
          <PlaneBox>
            <IconRow $gap={5}>
              <Pill $w={21} $alpha={0.1} aria-label="Add plane"><Q w={7}><path d="M10 1V19M1 10H19" stroke="#9fbab4" strokeWidth="4" /></Q><Caret c="#a5a7ae" s={4} /></Pill>
              <Pill $w={13} $alpha={0.3}>3D</Pill>
              <Pill $w={12} $alpha={0.3} aria-label="Plane menu"><Caret c="#96989f" /></Pill>
            </IconRow>
            <Pill>G:<Caret c="#96989f" /></Pill>
            <Pill>WCS:&nbsp; Top<Caret c="#96989f" /></Pill>
            <Pill>C:&nbsp; Top<Caret c="#96989f" /></Pill>
            <Pill>T:&nbsp; Top<Caret c="#96989f" /></Pill>
          </PlaneBox>
          <RotatePad>
            <PadButton aria-label="Tilt"><svg width="6" height="22" viewBox="0 0 6 22"><path d="M3 1V21M1 4L3 1L5 4M1 18L3 21L5 18" stroke="#8d8e93" fill="none" /></svg></PadButton>
            <PadButton aria-label="Reset"><Q w={7}><circle cx="10" cy="10" r="7" fill="none" stroke="#9b9ca1" strokeWidth="2.500" strokeDasharray="16 6" /></Q></PadButton>
            <PadButton $col={2} aria-label="Turn"><svg width="22" height="6" viewBox="0 0 22 6"><path d="M1 3H21M4 1L1 3L4 5M18 1L21 3L18 5" stroke="#8d8e93" fill="none" /></svg></PadButton>
          </RotatePad>
          <SideTools>
            {sideColors.map((c, i) => (
              <SideTool key={i} $c={c} aria-label={`View tool ${i + 1}`}>
                <svg width="5" height="6" viewBox="0 0 5 6">
                  {i === 10 ? <rect y="1" width="5" height="4" fill="currentColor" />
                    : i === 2 || i === 15 ? <circle cx="3" cy="3" r="2.500" fill="none" stroke="currentColor" />
                    : i % 3 === 0 ? <path d="M0 3H5M2 1V5" stroke="currentColor" /> : <path d="M0 1H5M0 3H5M0 5H5" stroke="currentColor" />}
                </svg>
              </SideTool>
            ))}
          </SideTools>
          <Scale>0.4172 in</Scale>
        </View>
      </Workspace>

      <BottomTabs>
        <PanelTabs>
          <BottomTab $w={32}>Toolpaths</BottomTab>
          <BottomTab $w={30}>Solids</BottomTab>
          <BottomTab $w={24}>Planes</BottomTab>
          <BottomTab $w={24} $on>Levels</BottomTab>
          <BottomTab $w={60}>Recent Functions</BottomTab>
        </PanelTabs>
        <SheetTab $w={62}><SheetIcon />OP0- initial stock</SheetTab>
        <SheetTab $w={74}><SheetIcon />OP1- prep backside</SheetTab>
        <SheetTab $w={54} $on><SheetIcon />OP2- Topside</SheetTab>
        <BottomTab $w={12} aria-label="Add sheet">+</BottomTab>
      </BottomTabs>
      <Status>
        <StatusItem $w={68}>SECTION VIEW: OFF</StatusItem>
        <StatusItem $w={100}>SELECTED ENTITIES: 0</StatusItem>
        <StatusItem $w={11}>X:</StatusItem>
        <StatusItem $w={42}>11.80335</StatusItem>
        <StatusItem $w={10}>Y:</StatusItem>
        <StatusItem $w={40}>35.59089</StatusItem>
        <StatusItem $w={11}>Z:</StatusItem>
        <StatusDrop $w={33}>6.25000<Caret c="#7f9bd0" s={4} /></StatusDrop>
        <StatusItem $w={16}>3D</StatusItem>
        <StatusDrop $w={47}>CPLANE: Top<Caret c="#7f9bd0" s={4} /></StatusDrop>
        <StatusDrop $w={47}>TPLANE: Top<Caret c="#7f9bd0" s={4} /></StatusDrop>
        <StatusDrop $w={39}>WCS: Top<Caret c="#7f9bd0" s={4} /></StatusDrop>
        <ShadeButton aria-label="Wireframe"><GlobeIcon /></ShadeButton>
        <ShadeButton aria-label="Dimmed wireframe"><GlobeIcon /></ShadeButton>
        <ShadeButton aria-label="No hidden lines"><GlobeIcon half /></ShadeButton>
        <ShadeButton $on aria-label="Outline shaded"><BallIcon id="ballA" c="#b9c6de" /></ShadeButton>
        <ShadeButton aria-label="Shaded"><BallIcon id="ballB" c="#8d98b0" /></ShadeButton>
      </Status>
      <Desk />
    </App>
  );
}
